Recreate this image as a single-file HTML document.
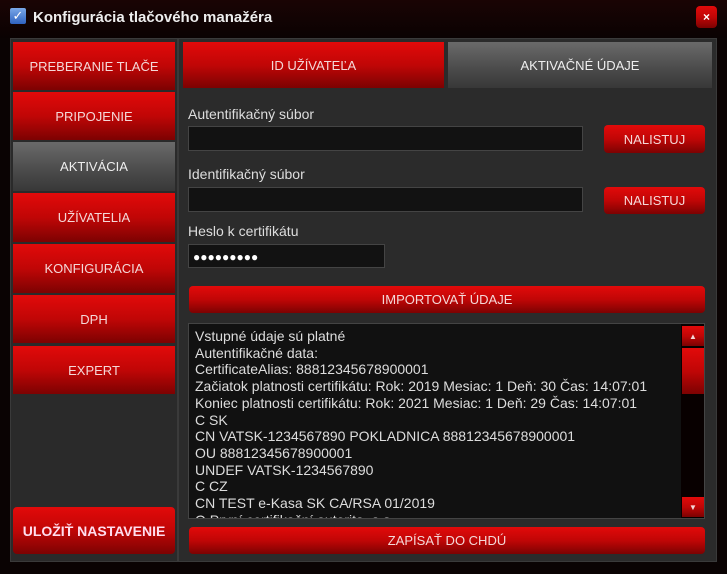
<!DOCTYPE html>
<html><head><meta charset="utf-8"><style>
*{box-sizing:border-box;margin:0;padding:0}
body{width:727px;height:574px;background:#0a0303;font-family:"Liberation Sans",sans-serif;position:relative;overflow:hidden;color:#eee}
.a{position:absolute}
.red{background:linear-gradient(#e20a0a,#c00606 50%,#7c0202);color:#f4d8d8;display:flex;align-items:center;justify-content:center;font-size:13px}
.gray{background:linear-gradient(#6a6a6a,#4a4a4a 60%,#383838);color:#eee;display:flex;align-items:center;justify-content:center;font-size:13px}
.btn{border-radius:4px}
.inp{background:#121212;border:1px solid #444}
.lbl{font-size:14px;color:#ddd}
.txt{font-size:14px;line-height:16.7px;color:#ddd;white-space:pre}
</style></head><body>
<div class="a" style="left:0;top:0;width:727px;height:38px;background:linear-gradient(#1a0404,#0a0202)"></div>
<div class="a" style="left:10px;top:8px;width:16px;height:16px;background:linear-gradient(#7aa8e8,#2f63c0);border-radius:2px;color:#fff;font-size:13px;line-height:16px;text-align:center">✓</div>
<div class="a" style="left:33px;top:9px;font-size:15px;font-weight:bold;color:#eee">Konfigurácia tlačového manažéra</div>
<div class="a red btn" style="left:696px;top:6px;width:21px;height:22px;font-size:12px;font-weight:bold;color:#fff">×</div>
<div class="a" style="left:10px;top:38px;width:168px;height:524px;background:#2a2a2a;border:1px solid #3a3a3a"></div>
<div class="a" style="left:178px;top:38px;width:539px;height:524px;background:#2b2b2b;border:1px solid #3a3a3a"></div>
<div class="a red" style="left:13px;top:42px;width:162px;height:48px">PREBERANIE TLAČE</div>
<div class="a red" style="left:13px;top:92px;width:162px;height:48px">PRIPOJENIE</div>
<div class="a gray" style="left:13px;top:142px;width:162px;height:49px">AKTIVÁCIA</div>
<div class="a red" style="left:13px;top:193px;width:162px;height:49px">UŽÍVATELIA</div>
<div class="a red" style="left:13px;top:244px;width:162px;height:49px">KONFIGURÁCIA</div>
<div class="a red" style="left:13px;top:295px;width:162px;height:48px">DPH</div>
<div class="a red" style="left:13px;top:346px;width:162px;height:48px">EXPERT</div>
<div class="a red btn" style="left:13px;top:507px;width:162px;height:47px;font-weight:bold;font-size:14px;color:#fde">ULOŽIŤ NASTAVENIE</div>
<div class="a red" style="left:183px;top:42px;width:261px;height:46px">ID UŽÍVATEĽA</div>
<div class="a gray" style="left:448px;top:42px;width:264px;height:46px">AKTIVAČNÉ ÚDAJE</div>
<div class="a lbl" style="left:188px;top:106px">Autentifikačný súbor</div>
<div class="a inp" style="left:188px;top:126px;width:395px;height:25px"></div>
<div class="a red btn" style="left:604px;top:125px;width:101px;height:28px">NALISTUJ</div>
<div class="a lbl" style="left:188px;top:166px">Identifikačný súbor</div>
<div class="a inp" style="left:188px;top:187px;width:395px;height:25px"></div>
<div class="a red btn" style="left:604px;top:187px;width:101px;height:27px">NALISTUJ</div>
<div class="a lbl" style="left:188px;top:223px">Heslo k certifikátu</div>
<div class="a inp" style="left:188px;top:244px;width:197px;height:24px;color:#fff;font-size:12px;padding:5px 0 0 4px;letter-spacing:0px">●●●●●●●●●</div>
<div class="a red btn" style="left:189px;top:286px;width:516px;height:27px">IMPORTOVAŤ ÚDAJE</div>
<div class="a" style="left:188px;top:323px;width:517px;height:196px;background:#111;border:1px solid #444;overflow:hidden">
<div class="txt" style="position:absolute;left:6px;top:4px">Vstupné údaje sú platné
Autentifikačné data:
CertificateAlias: 88812345678900001
Začiatok platnosti certifikátu: Rok: 2019 Mesiac: 1 Deň: 30 Čas: 14:07:01
Koniec platnosti certifikátu: Rok: 2021 Mesiac: 1 Deň: 29 Čas: 14:07:01
C SK
CN VATSK-1234567890 POKLADNICA 88812345678900001
OU 88812345678900001
UNDEF VATSK-1234567890
C CZ
CN TEST e-Kasa SK CA/RSA 01/2019
O První certifikační autorita, a.s.</div>
<div style="position:absolute;left:492px;top:0;width:24px;height:194px;background:#080000"></div>
<div class="red" style="position:absolute;left:493px;top:2px;width:22px;height:20px;font-size:8px">▲</div>
<div class="red" style="position:absolute;left:493px;top:24px;width:22px;height:46px"></div>
<div class="red" style="position:absolute;left:493px;top:173px;width:22px;height:20px;font-size:8px">▼</div>
</div>
<div class="a red btn" style="left:189px;top:527px;width:516px;height:27px">ZAPÍSAŤ DO CHDÚ</div>
</body></html>
